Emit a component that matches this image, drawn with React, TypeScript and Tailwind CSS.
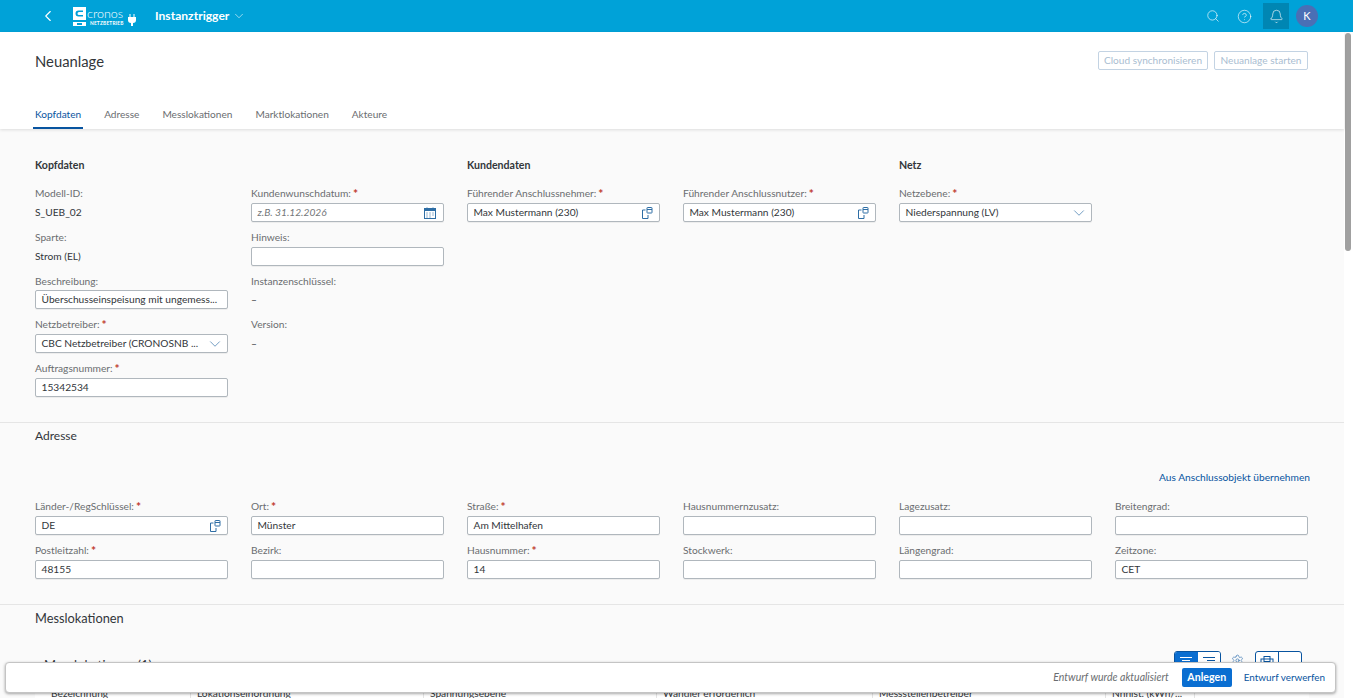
import { ChevronDown, ChevronLeft, Search, CircleHelp, Bell, Settings } from 'lucide-react';
import type { ReactNode } from 'react';

const inputCls = 'h-[19px] w-full bg-white border border-[#b0b7bd] rounded-[2px] flex items-center pl-[5.5px] pr-[6px] text-[10.2px] text-[#32363a] shadow-[0_1px_0_rgba(0,0,0,0.05)]';

function ValueHelp() {
  return (
    <svg width="12" height="12" viewBox="0 0 12 12" fill="none" stroke="#2f6ea5" strokeWidth="1" className="shrink-0 ml-auto">
      <path d="M4.500 3H1.500V11.500H7V8" />
      <rect x="6" y="0.500" width="5" height="5.500" rx="0.500" />
      <path d="M6 2.500h5" />
    </svg>
  );
}

function CalendarIcon() {
  return (
    <svg width="12" height="12" viewBox="0 0 12 12" fill="none" className="shrink-0 ml-auto mr-[1px]">
      <rect x="0.500" y="1.500" width="11" height="10" stroke="#2f6ea5" />
      <rect x="0.500" y="1.500" width="11" height="2.500" fill="#2f6ea5" />
      <path d="M3 0.500v2M9 0.500v2" stroke="#2f6ea5" />
      <path d="M2.500 6h1M5.500 6h1M8.500 6h1M2.500 8h1M5.500 8h1M8.500 8h1M2.500 10h1M5.500 10h1" stroke="#2f6ea5" />
    </svg>
  );
}

function ListIcon({ color, flip }: { color: string; flip?: boolean }) {
  return (
    <svg width="14" height="10" viewBox="0 0 14 10" stroke={color} strokeWidth="1.2">
      {flip ? <path d="M1 1.500h12M5 4.500h8M7 7.500h6" /> : <path d="M1 1.500h12M3 4.500h8M5 7.500h4" />}
    </svg>
  );
}

function Field({ label, required, children }: { label: string; required?: boolean; children?: ReactNode }) {
  return (
    <div className="h-[43.7px]">
      <div className="h-[18px] flex items-center text-[10.2px] text-[#6a6d70] whitespace-nowrap">
        {label}
        {required && <span className="text-[#c0392f] text-[12px] leading-none font-bold ml-[2px]">*</span>}
      </div>
      {children}
    </div>
  );
}

function Input({ value, icon, placeholder }: { value?: string; icon?: ReactNode; placeholder?: string }) {
  return (
    <div className={inputCls}>
      {placeholder ? (
        <span className="italic text-[#74777a]">{placeholder}</span>
      ) : (
        <span className="whitespace-nowrap">{value}</span>
      )}
      {icon}
    </div>
  );
}

function Select({ value }: { value: string }) {
  return (
    <div className={inputCls}>
      <span className="whitespace-nowrap">{value}</span>
      <ChevronDown size={18} strokeWidth={0.9} color="#2f6ea5" className="shrink-0 ml-auto mr-[-3px]" />
    </div>
  );
}

function Text({ children }: { children: ReactNode }) {
  return <div className="h-[19px] flex items-center text-[10.2px] text-[#32363a]">{children}</div>;
}

function Logo() {
  return (
    <div className="flex items-center gap-[1px] text-white">
      <svg width="13" height="20" viewBox="0 0 13 20">
        <rect x="0" y="1" width="13" height="13" fill="#fff" />
        <path d="M10 4.500H5.500a3 3 0 0 0 0 6H10V9H6a1.500 1.500 0 0 1 0-3h4z" fill="#009fd9" />
        <rect x="0" y="16" width="13" height="4" fill="#fff" />
        <rect x="4" y="17" width="5" height="2" fill="#009fd9" />
      </svg>
      <div className="flex flex-col leading-none w-[40px]">
        <span className="text-[12.5px] font-light leading-[13px] mt-[1px]">cronos</span>
        <span className="text-[4.8px] font-bold leading-[6px] tracking-[0.2px] pl-[3px]">NETZBETRIEB</span>
      </div>
      <svg width="8" height="12" viewBox="0 0 8 12" fill="#fff" className="mt-[8px]">
        <path d="M1.500 0h1v3h3V0h1v3H8v3a3 3 0 0 1-3 3v3H3V9a3 3 0 0 1-3-3V3h1.500z" />
      </svg>
    </div>
  );
}

export default function App() {
  return (
    <div className="relative h-[698px] overflow-hidden bg-white font-['Lato','Open_Sans',sans-serif] flex flex-col">
      <header className="h-8 shrink-0 bg-[#00a2d8] flex items-center text-white">
        <ChevronLeft size={18} strokeWidth={1.5} className="ml-[39px]" />
        <div className="ml-[16px]">
          <Logo />
        </div>
        <span className="ml-[19px] text-[12.1px] font-bold">Instanztrigger</span>
        <ChevronDown size={14} strokeWidth={1} className="ml-[3px]" />
        <Search size={14} strokeWidth={1.1} className="ml-auto" />
        <CircleHelp size={15} strokeWidth={1} className="ml-[17px]" />
        <div className="ml-[11px] w-[26px] h-[26px] bg-[#0086b3] flex items-center justify-center">
          <Bell size={15} strokeWidth={1} />
        </div>
        <div className="ml-[7px] mr-[35px] w-[22px] h-[22px] rounded-full bg-[#4a6fb5] flex items-center justify-center text-[11px]">K</div>
      </header>

      <div className="flex flex-1 min-h-0">
        <main className="w-[1344px] shrink-0 flex flex-col bg-[#fafafa]">
          <div className="h-[97px] shrink-0 bg-white shadow-[0_1px_3px_rgba(0,0,0,0.12)] relative px-[35px]">
            <div className="flex items-start">
              <h1 className="mt-[19px] text-[14.8px] text-[#32363a] leading-[20px]">Neuanlage</h1>
              <div className="ml-auto mr-[1px] mt-[19px] flex gap-[6px]">
                <button className="h-[19px] w-[110px] pt-[1px] border border-[#c3d3e3] rounded-[2px] text-[10.1px] text-[#a9bdd1] whitespace-nowrap">Cloud synchronisieren</button>
                <button className="h-[19px] w-[94px] pt-[1px] border border-[#c3d3e3] rounded-[2px] text-[10.1px] text-[#a9bdd1] whitespace-nowrap">Neuanlage starten</button>
              </div>
            </div>
            <nav className="mt-[32px] flex gap-[23px] text-[10.1px] text-[#6a6d70]">
              <span className="relative text-[#0854a0] h-[26px] pb-[2px] flex items-center">
                Kopfdaten
                <span className="absolute left-[-2px] right-[-2px] bottom-0 h-[2px] bg-[#0854a0]" />
              </span>
              <span className="h-[26px] pb-[2px] flex items-center">Adresse</span>
              <span className="h-[26px] pb-[2px] flex items-center">Messlokationen</span>
              <span className="h-[26px] pb-[2px] flex items-center">Marktlokationen</span>
              <span className="h-[26px] pb-[2px] flex items-center">Akteure</span>
            </nav>
          </div>

          <section className="h-[294px] shrink-0 border-b border-[#e5e5e5] px-[35px] pt-[28px]">
            <div className="grid grid-cols-[repeat(6,193px)] gap-x-[23px] h-[18px] text-[10.6px] font-bold text-[#32363a] items-center">
              <div>Kopfdaten</div>
              <div />
              <div>Kundendaten</div>
              <div />
              <div>Netz</div>
            </div>
            <div className="mt-[10px] grid grid-cols-[repeat(6,193px)] gap-x-[23px]">
              <div>
                <Field label="Modell-ID:"><Text>S_UEB_02</Text></Field>
                <Field label="Sparte:"><Text>Strom (EL)</Text></Field>
                <Field label="Beschreibung:"><Input value="Überschusseinspeisung mit ungemess..." /></Field>
                <Field label="Netzbetreiber:" required><Select value="CBC Netzbetreiber (CRONOSNB ..." /></Field>
                <Field label="Auftragsnummer:" required><Input value="15342534" /></Field>
              </div>
              <div>
                <Field label="Kundenwunschdatum:" required><Input placeholder="z.B. 31.12.2026" icon={<CalendarIcon />} /></Field>
                <Field label="Hinweis:"><Input /></Field>
                <Field label="Instanzenschlüssel:"><Text>–</Text></Field>
                <Field label="Version:"><Text>–</Text></Field>
              </div>
              <Field label="Führender Anschlussnehmer:" required><Input value="Max Mustermann (230)" icon={<ValueHelp />} /></Field>
              <Field label="Führender Anschlussnutzer:" required><Input value="Max Mustermann (230)" icon={<ValueHelp />} /></Field>
              <Field label="Netzebene:" required><Select value="Niederspannung (LV)" /></Field>
            </div>
          </section>

          <section className="h-[182px] shrink-0 border-b border-[#e5e5e5] px-[35px] pt-[4px]">
            <h2 className="text-[12px] text-[#32363a] leading-[18px]">Adresse</h2>
            <div className="mt-[25px] mr-[-1px] text-right text-[10.2px] text-[#0854a0] leading-[14px]">Aus Anschlussobjekt übernehmen</div>
            <div className="mt-[14px] grid grid-cols-[repeat(6,193px)] gap-x-[23px]">
              <Field label="Länder-/RegSchlüssel:" required><Input value="DE" icon={<ValueHelp />} /></Field>
              <Field label="Ort:" required><Input value="Münster" /></Field>
              <Field label="Straße:" required><Input value="Am Mittelhafen" /></Field>
              <Field label="Hausnummernzusatz:"><Input /></Field>
              <Field label="Lagezusatz:"><Input /></Field>
              <Field label="Breitengrad:"><Input /></Field>
              <Field label="Postleitzahl:" required><Input value="48155" /></Field>
              <Field label="Bezirk:"><Input /></Field>
              <Field label="Hausnummer:" required><Input value="14" /></Field>
              <Field label="Stockwerk:"><Input /></Field>
              <Field label="Längengrad:"><Input /></Field>
              <Field label="Zeitzone:"><Input value="CET" /></Field>
            </div>
          </section>

          <section className="px-[35px] pt-[4px]">
            <h2 className="text-[12.8px] text-[#32363a] leading-[18px]">Messlokationen</h2>
            <div className="mt-[24px] flex items-start pl-[9px] pr-[7px] h-[35px]">
              <span className="text-[13px] text-[#32363a] leading-[18px] mt-[5px]">Messlokationen (1)</span>
              <div className="ml-auto flex items-start">
                <div className="flex h-[20px] w-[47px] border border-[#0854a0] rounded-[3px] overflow-hidden">
                  <div className="flex-1 bg-[#0a6ed1] flex items-center justify-center"><ListIcon color="#ffffff" /></div>
                  <div className="flex-1 bg-white flex items-center justify-center"><ListIcon color="#0854a0" flip /></div>
                </div>
                <Settings size={13} strokeWidth={1} color="#0854a0" className="ml-[10px] mt-[3px]" />
                <div className="ml-[11px] flex h-[20px] w-[47px] border border-[#0854a0] rounded-[3px] bg-white">
                  <div className="flex-1 border-r border-[#0854a0] flex justify-center pt-[4px]">
                    <svg width="14" height="12" viewBox="0 0 14 12" fill="none" stroke="#0854a0"><rect x="1" y="3" width="12" height="8" /><rect x="4" y="0.500" width="6" height="5" /></svg>
                  </div>
                  <div className="flex-1" />
                </div>
              </div>
            </div>
            <div className="h-[24px] bg-white grid grid-cols-[155px_233px_233px_216px_233px_90px] text-[10.2px] text-[#32363a] leading-[14px]">
              <div className="pl-[16px] overflow-hidden">Bezeichnung</div>
              <div className="pl-[6px] border-l border-[#e5e5e5]">Lokationseinordnung</div>
              <div className="pl-[6px] border-l border-[#e5e5e5]">Spannungsebene</div>
              <div className="pl-[6px] border-l border-[#e5e5e5]">Wandler erforderlich</div>
              <div className="pl-[6px] border-l border-[#e5e5e5]">Messstellenbetreiber</div>
              <div className="pl-[6px] border-x border-[#e5e5e5] truncate">Nnhist. (kWh/...</div>
            </div>
          </section>
        </main>

        <div className="flex-1 bg-white pl-[1px] pt-[1px]">
          <div className="w-[6px] h-[218px] rounded-[3px] bg-[#a0a0a0]" />
        </div>
      </div>

      <div className="absolute left-[5px] top-[662px] w-[1331px] h-[31px] bg-white border border-[#c4c4c4] rounded-[4px] shadow-[0_1px_3px_rgba(0,0,0,0.35)] flex items-center justify-end pr-[10px] text-[10.2px]">
        <span className="italic text-[#6a6d70] text-[10.5px]">Entwurf wurde aktualisiert</span>
        <button className="ml-[13px] w-[50px] h-[19px] rounded-[2px] bg-[#0a6ed1] text-white font-bold text-[10.6px]">Anlegen</button>
        <span className="ml-[12px] text-[#0854a0] text-[9.9px]">Entwurf verwerfen</span>
      </div>
    </div>
  );
}
